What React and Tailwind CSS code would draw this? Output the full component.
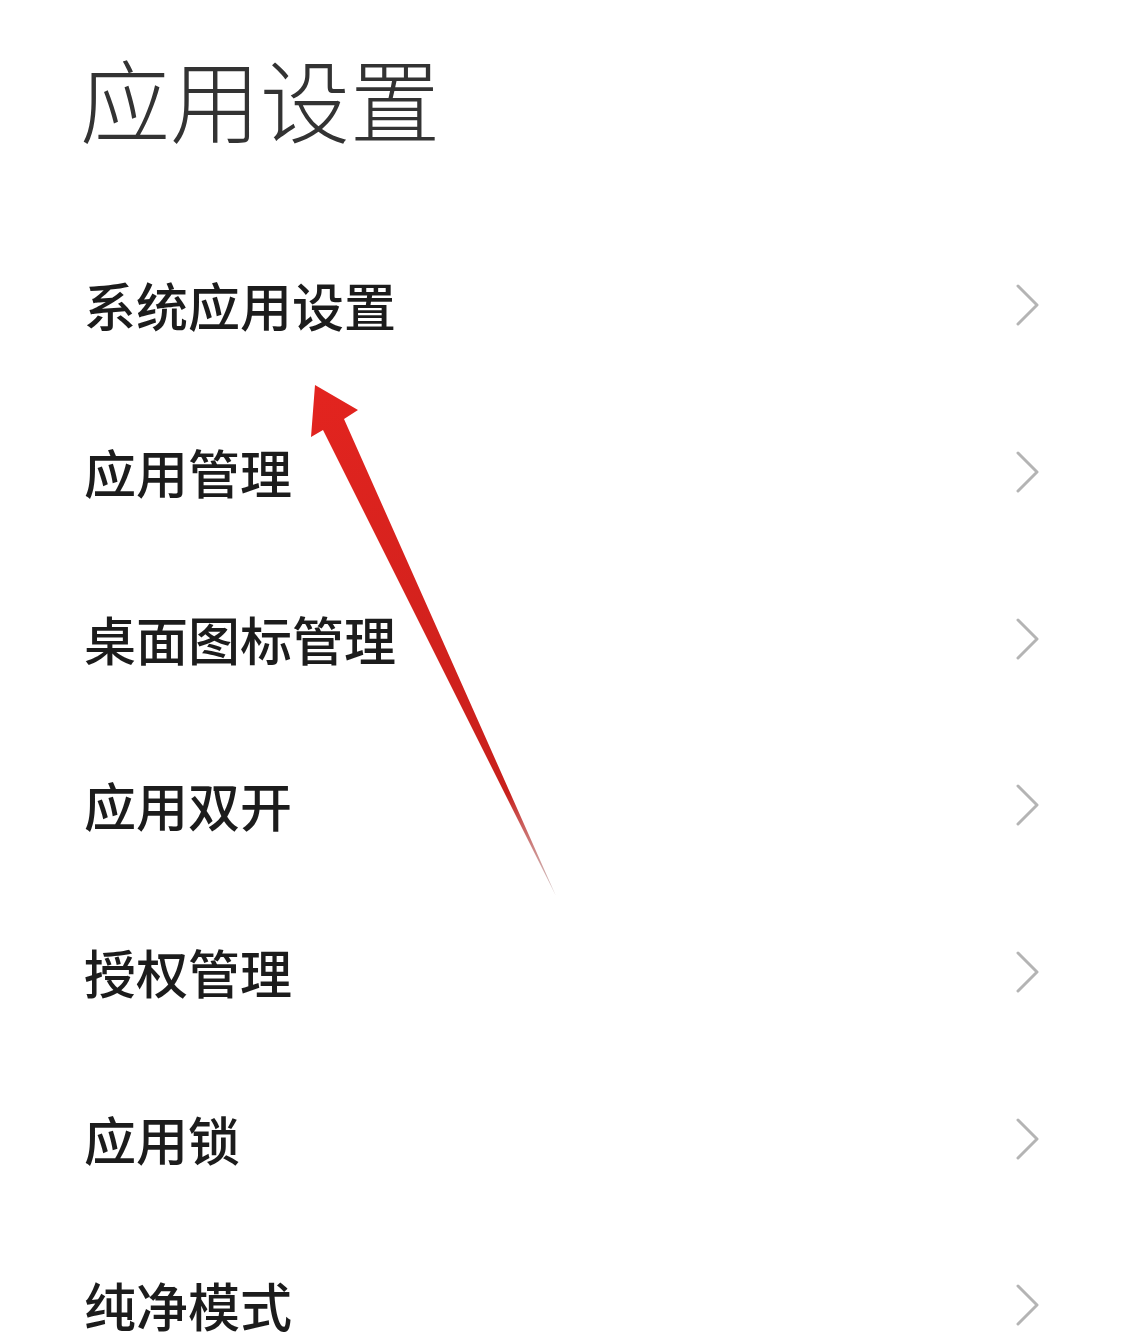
const items = ['系统应用设置', '应用管理', '桌面图标管理', '应用双开', '授权管理', '应用锁', '纯净模式']

function Chevron() {
  return (
    <svg width="26" height="44" viewBox="0 0 26 44" fill="none">
      <polyline points="3,3 22,22 3,41" stroke="#b4b4b4" strokeWidth="3" strokeLinecap="round" strokeLinejoin="round" />
    </svg>
  )
}

export default function App() {
  return (
    <div
      className="relative w-[1125px] h-[1335px] overflow-hidden bg-white"
      style={{ fontFamily: '"Noto Sans CJK SC", "Noto Sans", sans-serif' }}
    >
      {/* Title */}
      <h1 className="pl-[80px] pt-[52px] mb-[80px] text-[90px] leading-none font-light text-[#333333]">
        应用设置
      </h1>

      {/* List */}
      <ul>
        {items.map((item) => (
          <li key={item} className="h-[166.7px] flex items-center justify-between pl-[84px] pr-[84px]">
            <span className="text-[52px] leading-none font-medium text-[#1c1c1c]">{item}</span>
            <Chevron />
          </li>
        ))}
      </ul>

      {/* Annotation arrow */}
      <svg className="absolute left-0 top-0 pointer-events-none" width="1125" height="1335" viewBox="0 0 1125 1335">
        <defs>
          <linearGradient id="shaft" x1="315" y1="385" x2="556" y2="896" gradientUnits="userSpaceOnUse">
            <stop offset="0" stopColor="#e3241f" />
            <stop offset="0.8" stopColor="#c8201c" />
            <stop offset="1" stopColor="#b8a0a0" stopOpacity="0.6" />
          </linearGradient>
        </defs>
        <polygon points="315,385 358,410 344,419 556,896 323,430 311,437" fill="url(#shaft)" />
      </svg>
    </div>
  )
}
